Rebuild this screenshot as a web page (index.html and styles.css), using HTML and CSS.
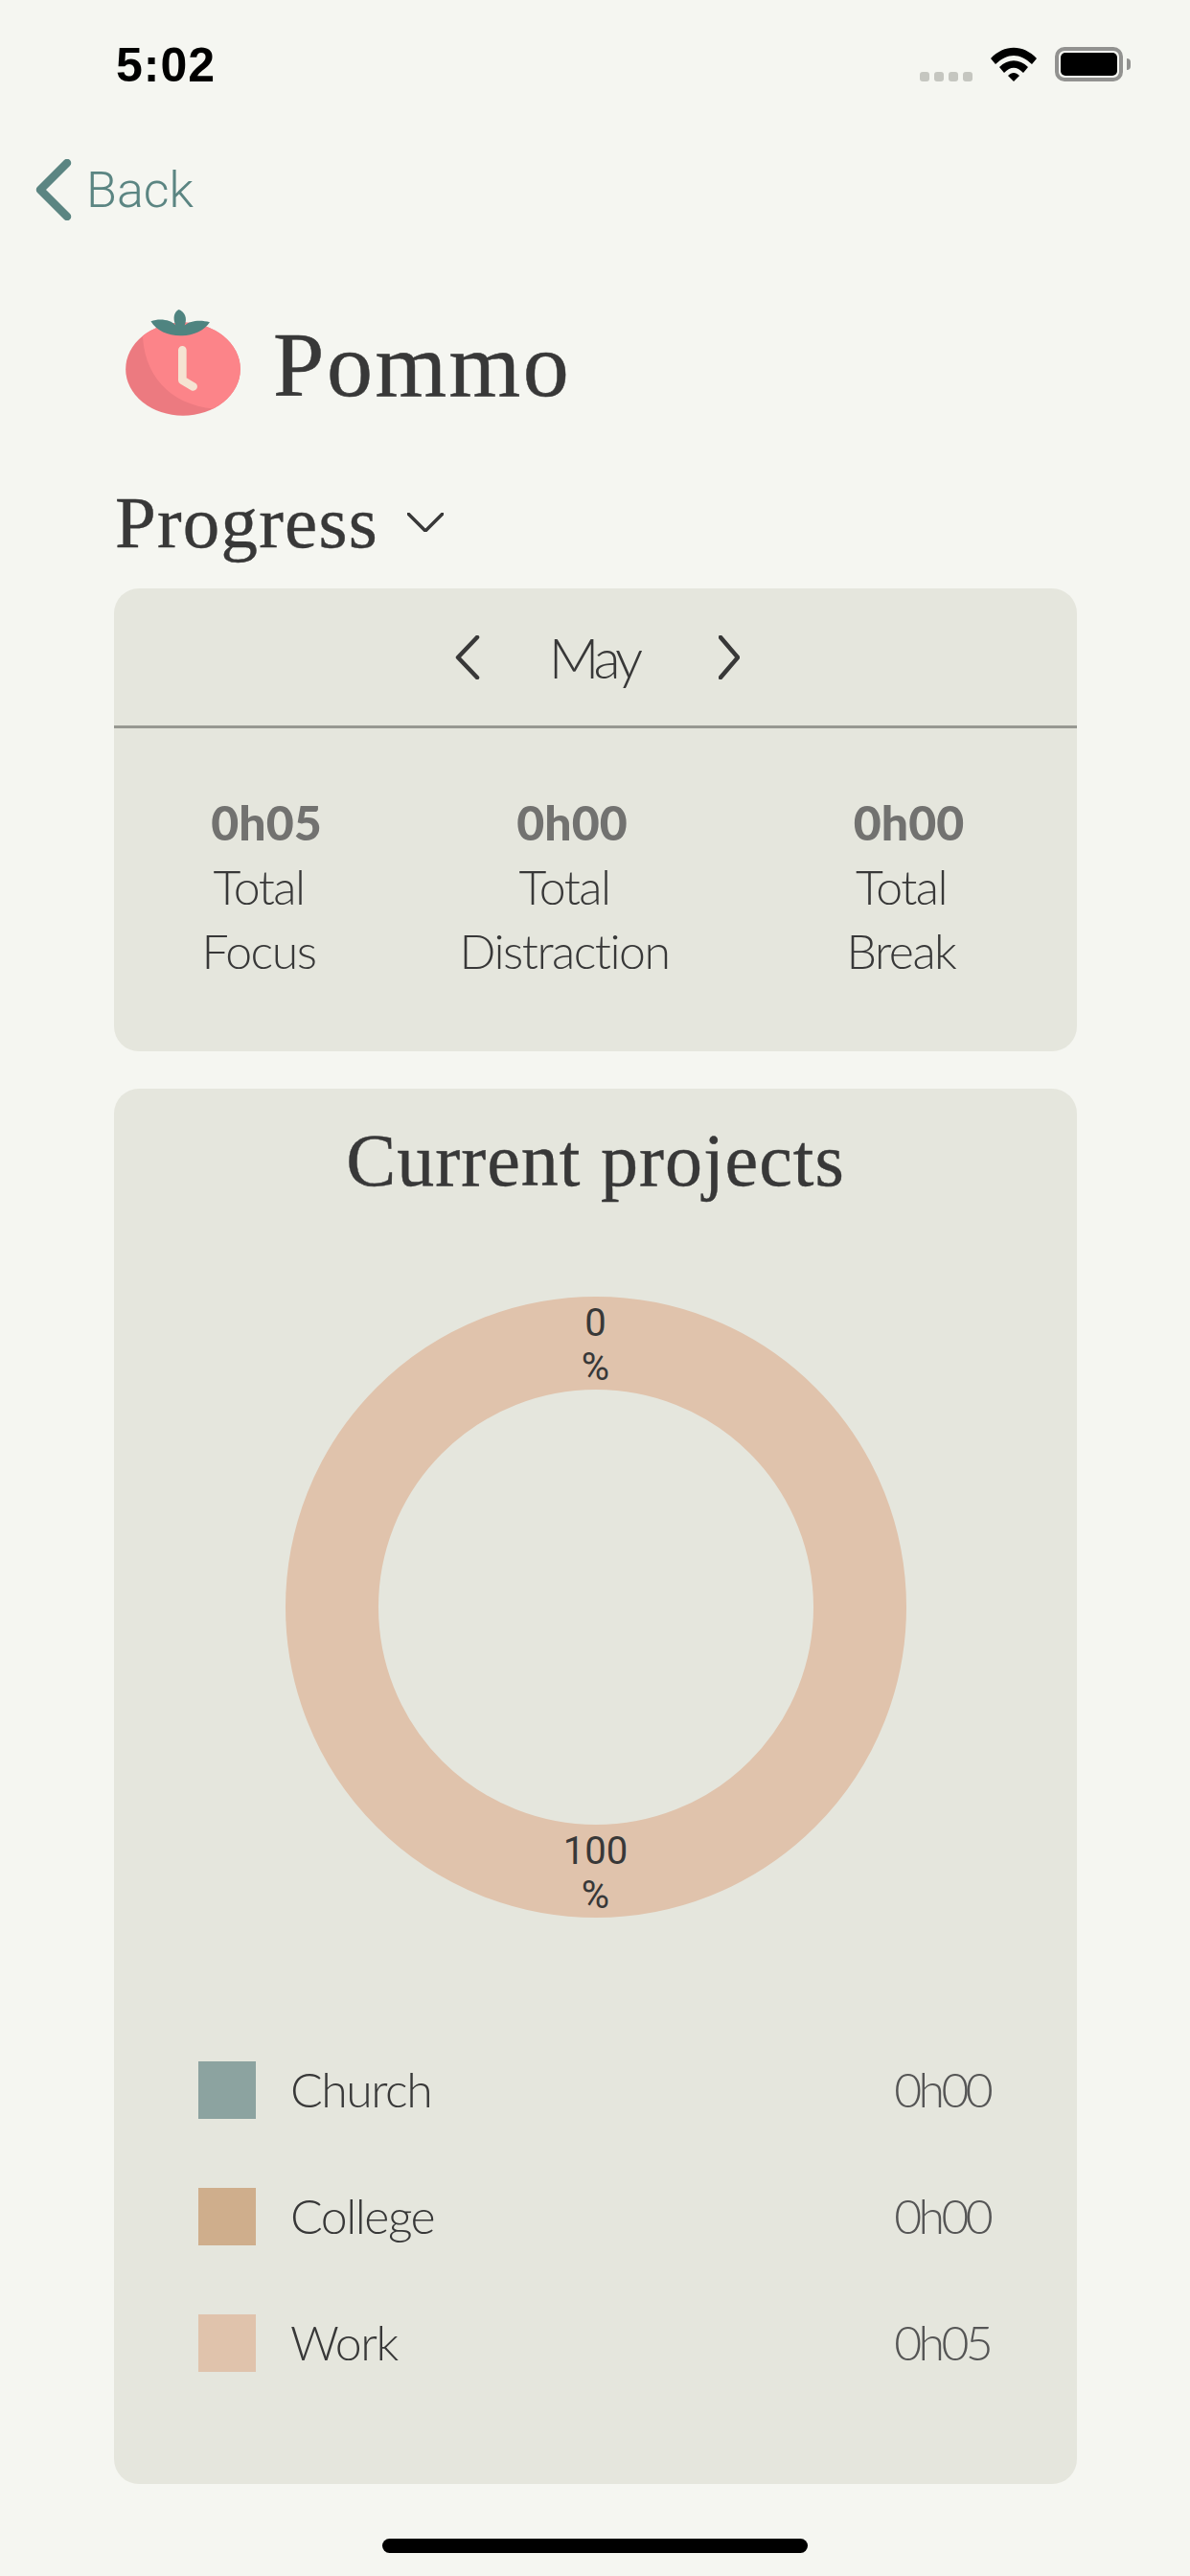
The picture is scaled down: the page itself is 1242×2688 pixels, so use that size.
FILE: index.html
```html
<!DOCTYPE html>
<html lang="en">
<head>
    <meta charset="UTF-8">
    <meta name="viewport" content="width=device-width, initial-scale=1.0">
    <title>Pommo Progress</title>
    <link rel="stylesheet" href="styles.css">
</head>
<body>
    <div class="screen">
        <header class="status-bar">
            <span class="status-time">5:02</span>
            <div class="status-icons">
                <div class="signal">
                    <span></span><span></span><span></span><span></span>
                </div>
                <svg class="wifi" viewBox="0 0 48 36" width="48" height="36">
                    <path d="M0 12 C14 -3 34 -3 48 12 L43 18 C30 6 18 6 5 18 Z" fill="#000"/>
                    <path d="M9 21 C18 12 30 12 39 21 L34 27 C27 20 21 20 14 27 Z" fill="#000"/>
                    <path d="M18 30 C22 26 26 26 30 30 L24 36 Z" fill="#000"/>
                </svg>
                <div class="battery">
                    <div class="battery-level"></div>
                </div>
            </div>
        </header>

        <a class="back-link">
            <svg viewBox="0 0 38 64" width="38" height="64">
                <path d="M33 4 L5 32 L33 60" fill="none" stroke="#5b8582" stroke-width="8.5" stroke-linecap="round" stroke-linejoin="round"/>
            </svg>
            <span>Back</span>
        </a>

        <div class="brand">
            <svg class="brand-logo" viewBox="90 125 366 340" width="122" height="113">
                <defs>
                    <clipPath id="tomatoBody">
                        <ellipse cx="273" cy="315" rx="180" ry="146"/>
                    </clipPath>
                </defs>
                <ellipse cx="273" cy="315" rx="180" ry="146" fill="#ec7a80"/>
                <path d="M147 165 C135 320 220 425 370 440 L470 440 L470 165 Z" fill="#fc8489" clip-path="url(#tomatoBody)"/>
                <path d="M172 165 C200 155 235 160 250 178 C240 155 245 135 260 128 C278 135 288 155 278 178 C295 162 330 160 357 168 C340 195 300 212 265 210 C225 210 190 195 172 165 Z" fill="#4f8480"/>
                <path d="M271 255 V350 L305 370" fill="none" stroke="#f5e3d2" stroke-width="26" stroke-linecap="round" stroke-linejoin="round"/>
            </svg>
            <h1>Pommo</h1>
        </div>

        <div class="section-title">
            <h2>Progress</h2>
            <svg viewBox="0 0 38 20" width="38" height="20">
                <path d="M1 1 L19 19 L37 1" fill="none" stroke="#383838" stroke-width="3.5" stroke-linecap="round" stroke-linejoin="round"/>
            </svg>
        </div>

        <section class="card summary-card">
            <div class="month-picker">
                <svg viewBox="0 0 26 46" width="26" height="46">
                    <path d="M23 2 L3 23 L23 44" fill="none" stroke="#383838" stroke-width="4.5" stroke-linecap="round" stroke-linejoin="round"/>
                </svg>
                <span class="month-name">May</span>
                <svg viewBox="0 0 22 46" width="22" height="46">
                    <path d="M2 2 L20 23 L2 44" fill="none" stroke="#383838" stroke-width="4.5" stroke-linecap="round" stroke-linejoin="round"/>
                </svg>
            </div>
            <div class="stats">
                <div class="stat">
                    <div class="stat-value">0h05</div>
                    <div>Total</div>
                    <div>Focus</div>
                </div>
                <div class="stat">
                    <div class="stat-value">0h00</div>
                    <div>Total</div>
                    <div>Distraction</div>
                </div>
                <div class="stat">
                    <div class="stat-value">0h00</div>
                    <div>Total</div>
                    <div>Break</div>
                </div>
            </div>
        </section>

        <section class="card projects-card">
            <h2 class="projects-title">Current projects</h2>
            <div class="donut">
                <div class="donut-label donut-label-top">0<br>%</div>
                <div class="donut-label donut-label-bottom">100<br>%</div>
            </div>
            <ul class="legend">
                <li class="legend-row">
                    <span class="swatch swatch-church"></span>
                    <span class="legend-name">Church</span>
                    <span class="legend-time">0h00</span>
                </li>
                <li class="legend-row">
                    <span class="swatch swatch-college"></span>
                    <span class="legend-name">College</span>
                    <span class="legend-time">0h00</span>
                </li>
                <li class="legend-row">
                    <span class="swatch swatch-work"></span>
                    <span class="legend-name">Work</span>
                    <span class="legend-time">0h05</span>
                </li>
            </ul>
        </section>

        <div class="home-bar"></div>
    </div>
</body>
</html>
```

FILE: styles.css
```css
:root {
    --page: #f5f6f1;
    --card: #e5e6dd;
    --dark: #383838;
    --teal: #5b8582;
    --church: #8ca3a0;
    --college: #cfae8c;
    --work: #e0c3ac;
}

* {
    box-sizing: border-box;
    margin: 0;
    padding: 0;
}

body {
    background-color: var(--page);
    color: var(--dark);
    font-family: Lato, sans-serif;
    font-weight: 300;
}

.screen {
    width: 1242px;
    height: 2688px;
    overflow: hidden;
    position: relative;
}

/* Status bar */
.status-bar {
    height: 134px;
    display: flex;
    justify-content: space-between;
    align-items: center;
    padding: 0 70px 0 121px;
}

.status-time {
    font-family: "Liberation Sans", sans-serif;
    font-weight: 700;
    font-size: 50px;
    letter-spacing: 1px;
    padding-top: 2px;
    color: #000;
}

.status-icons {
    display: flex;
    align-items: flex-start;
    gap: 19px;
    height: 36px;
}

.signal {
    display: flex;
    gap: 5px;
    align-self: flex-end;
}

.signal span {
    width: 10px;
    height: 10px;
    border-radius: 3px;
    background-color: #c5c6c0;
}

.battery {
    width: 71px;
    height: 36px;
    border: 4px solid #929290;
    border-radius: 10px;
    padding: 2px;
    position: relative;
}

.battery::after {
    content: "";
    position: absolute;
    right: -12px;
    top: 8px;
    width: 4px;
    height: 12px;
    background-color: #929290;
    border-radius: 0 4px 4px 0;
}

.battery-level {
    height: 100%;
    background-color: #000;
    border-radius: 5px;
}

/* Navigation */
.back-link {
    display: flex;
    align-items: center;
    gap: 15px;
    height: 64px;
    margin-top: 32px;
    padding-left: 37px;
    color: var(--teal);
    font-family: Roboto, sans-serif;
    font-weight: 300;
    font-size: 52px;
}

.brand {
    display: flex;
    align-items: center;
    gap: 33px;
    height: 113px;
    margin-top: 92px;
    padding-left: 130px;
}

.brand h1 {
    font-family: "Liberation Serif", serif;
    font-weight: 400;
    font-size: 96px;
    letter-spacing: 2.5px;
    -webkit-text-stroke: 0.5px var(--dark);
    position: relative;
    top: 2px;
}

.section-title {
    display: flex;
    align-items: center;
    gap: 30px;
    height: 72px;
    margin: 74px 0 33px;
    padding-left: 120px;
}

.section-title h2 {
    font-family: "Liberation Serif", serif;
    font-weight: 400;
    font-size: 77px;
    letter-spacing: 1.2px;
    -webkit-text-stroke: 0.4px var(--dark);
}

/* Cards */
.card {
    width: 1005px;
    margin-left: 119px;
    background-color: var(--card);
    border-radius: 26px;
}

.summary-card {
    height: 483px;
}

.month-picker {
    height: 146px;
    display: flex;
    justify-content: center;
    align-items: center;
    gap: 78px;
    padding-left: 4px;
    border-bottom: 3px solid #979891;
}

.month-name {
    margin: 0 6px 0 -6px;
    font-size: 58px;
    letter-spacing: -5px;
}

.stats {
    display: grid;
    grid-template-columns: 302px 336px 367px;
    padding-top: 65px;
    text-align: center;
    font-size: 50px;
    line-height: 67px;
    letter-spacing: -1.5px;
}

.stat-value {
    padding-left: 16px;
    font-weight: 900;
    font-size: 50px;
    letter-spacing: 0;
    color: #727270;
}

.projects-card {
    height: 1456px;
    margin-top: 39px;
    padding-top: 30px;
}

.projects-title {
    height: 90px;
    line-height: 90px;
    text-align: center;
    font-family: "Liberation Serif", serif;
    font-weight: 400;
    font-size: 78px;
    letter-spacing: 1px;
    -webkit-text-stroke: 0.4px var(--dark);
}

/* Donut chart */
.donut {
    width: 648px;
    height: 648px;
    margin: 97px auto 0;
    border: 97px solid var(--work);
    border-radius: 50%;
    position: relative;
}

.donut-label {
    position: absolute;
    left: 0;
    right: 0;
    text-align: center;
    font-family: Roboto, sans-serif;
    font-weight: 400;
    font-size: 40px;
    line-height: 46px;
}

.donut-label-top {
    top: -92px;
}

.donut-label-bottom {
    bottom: -97px;
}

/* Legend */
.legend {
    list-style: none;
    margin-top: 150px;
    padding: 0 91px 0 88px;
}

.legend-row {
    display: flex;
    align-items: center;
    height: 60px;
    margin-bottom: 72px;
    font-size: 50px;
    letter-spacing: -1.5px;
}

.swatch {
    width: 60px;
    height: 60px;
    margin-right: 36px;
}

.swatch-church {
    background-color: var(--church);
}

.swatch-college {
    background-color: var(--college);
}

.swatch-work {
    background-color: var(--work);
}

.legend-name {
    flex: 1;
    padding-bottom: 3px;
}

.legend-time {
    padding-bottom: 3px;
    letter-spacing: -3.7px;
    color: #555;
}

.home-bar {
    position: absolute;
    left: 399px;
    bottom: 24px;
    width: 444px;
    height: 15px;
    border-radius: 8px;
    background-color: #000;
}
```
